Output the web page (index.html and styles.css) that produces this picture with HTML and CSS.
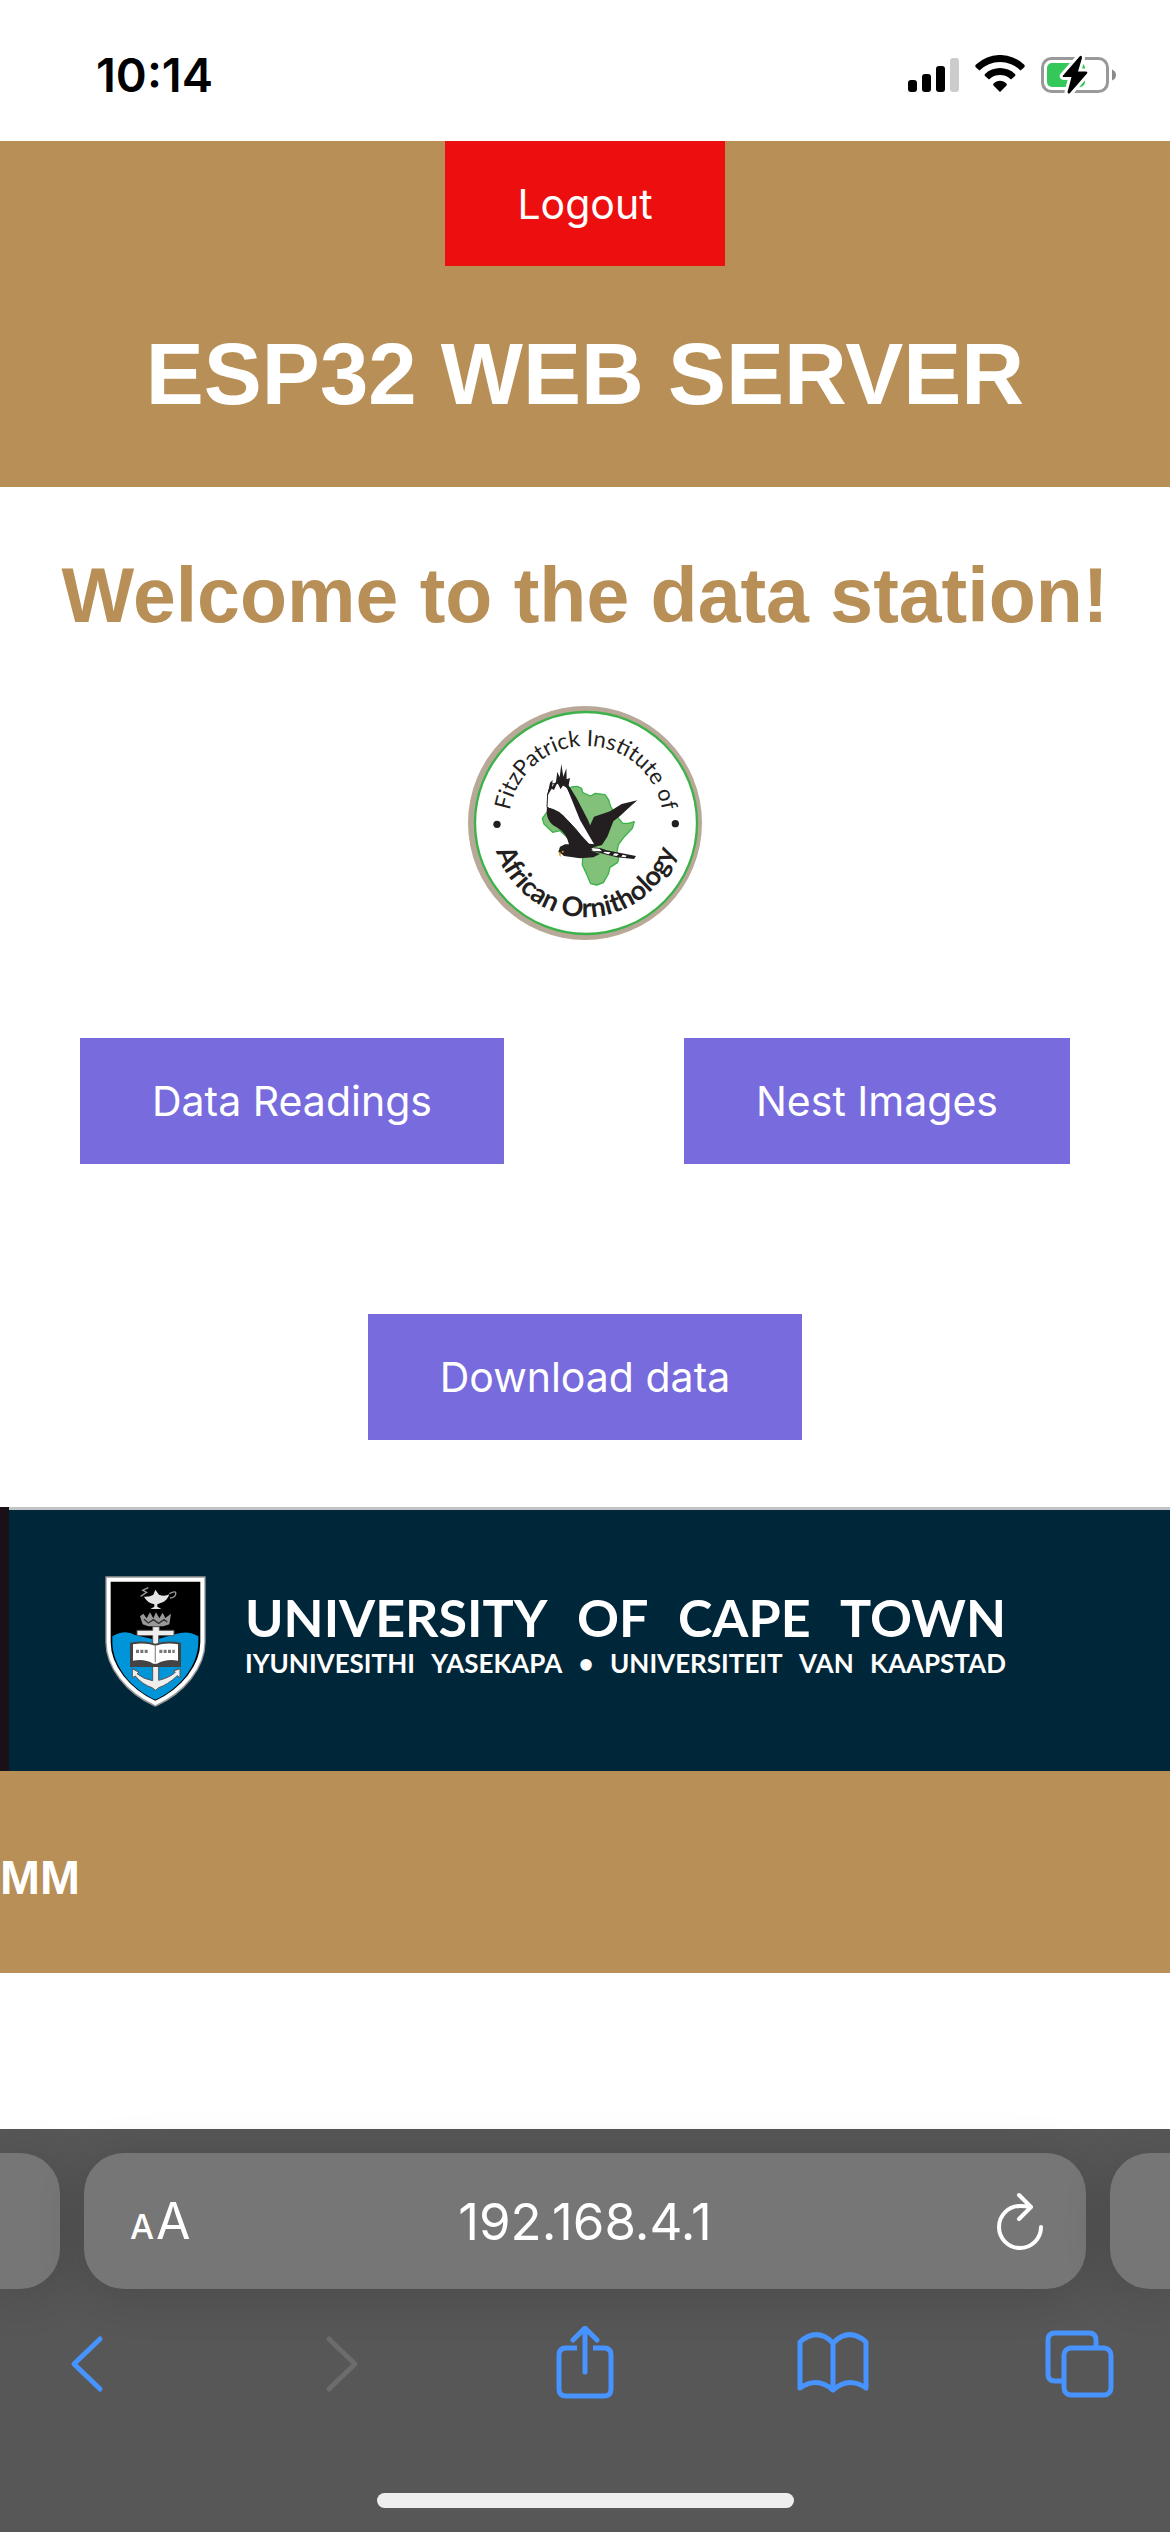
FILE: index.html
```html
<!DOCTYPE html>
<html lang="en">
<head>
<meta charset="utf-8">
<meta name="viewport" content="width=device-width, initial-scale=1">
<title>ESP32 Web Server</title>
<link rel="stylesheet" href="styles.css">
</head>
<body>
<div class="status-bar">
  <time class="clock">10:14</time>
  <svg class="status-icons" viewBox="0 0 210 40" role="img" aria-label="Signal, Wi-Fi and battery">
    <rect x="2" y="25" width="9" height="12" rx="3"/>
    <rect x="16" y="19" width="9" height="18" rx="3"/>
    <rect x="30" y="11" width="9" height="26" rx="3"/>
    <rect x="44" y="3" width="9" height="34" rx="3" fill="#ccc"/>
    <path d="M70 12.5Q68.500 11 70 9.500A35 35 0 0 1 118 9.500Q119.500 11 118 12.500L114.500 15.500A29 29 0 0 0 73.500 15.500Z"/>
    <path d="M79 21Q78 20 79 19A22 22 0 0 1 109 19Q110 20 109 21L105 24.500A16 16 0 0 0 83 24.500Z"/>
    <path d="M94 37L87.500 30.500Q86.500 29 88 28A10 10 0 0 1 100 28Q101.500 29 100.500 30.500Z"/>
    <rect x="136.500" y="3.500" width="65" height="33" rx="9" fill="none" stroke="#999" stroke-width="3"/>
    <path d="M206 14.500Q210 16 210 20Q210 24 206 25.500Z" fill="#8a8a8a"/>
    <rect x="141" y="8" width="38" height="24" rx="5" fill="#34c759"/>
    <path d="M174 1L157 20.500Q156 22 158 22H165.500L161.500 37Q162 39.500 164 38L181 18.500Q182 16.500 180 16.500H172L176 3Q176 0 174 1Z" stroke="#fff" stroke-width="6" paint-order="stroke" stroke-linejoin="round"/>
  </svg>
</div>

<header class="site-header">
  <button class="button button-logout" type="button">Logout</button>
  <h1>ESP32 WEB SERVER</h1>
</header>

<main>
  <h2>Welcome to the data station!</h2>
  <svg class="institute-logo" viewBox="54 48 702 702" role="img" aria-label="FitzPatrick Institute of African Ornithology">
    <defs>
      <path id="arc-top" d="M176 410V400A232 232 0 0 1 640 400V410"/>
      <path id="arc-bottom" d="M126 390V400A282 282 0 0 0 690 400V390"/>
    </defs>
    <circle cx="405" cy="399" r="351" fill="#b8a898"/>
    <circle cx="408" cy="399" r="333" fill="#fff" stroke="#3cb24a" stroke-width="7"/>
    <path d="M365 291L382 289L395 295L398 308L422 318L436 310L465 314L476 330L482 350L500 378L518 400L535 400L553 395L547 415L523 440L505 464L501 485L506 508L502 518L480 532L475 552L460 578L440 585L422 581L411 555L397 525L398 503L350 440L330 422L308 427L282 402L277 385L292 365L300 340Z" fill="#82c17a" stroke="#3cb24a" stroke-width="4" stroke-linejoin="round"/>
    <path d="M291 352L293 312L303 282L325 280L350 290L440 465L410 462Q350 370 291 352Z" fill="#fff" stroke="#231f20" stroke-width="3"/>
    <path d="M292 318L300 278L308 270L306 290L318 275L322 245L329 262L334 222L340 260L349 235L350 268L360 264L356 286L380 325L414 390L444 466L434 466L390 390L352 296L340 284L332 298L322 278L312 300L305 296Z" fill="#231f20"/>
    <path d="M291 352Q330 358 356 395L418 462L442 465L418 411L432 380L480 364L515 342L562 331L540 350L510 378L490 394L472 440L456 465L430 472L424 482L450 492L430 502L390 505L342 498L332 490L325 486L330 470L345 463H357Q350 430 320 412Q285 395 291 352Z" fill="#231f20"/>
    <path d="M424 473Q450 470 470 481L558 498L552 507L500 502L430 484Z" fill="#231f20"/>
    <path d="M424 474L448 476L456 484L430 483ZM464 485L482 487L476 493L460 488ZM494 490L506 492L500 498L488 496ZM518 494L530 497L526 502L514 500Z" fill="#fff"/>
    <path d="M326 487L333 488L332 502Q326 496 326 487Z" fill="#d7a52c"/>
    <circle cx="338" cy="485" r="3" fill="#d7a52c"/>
    <circle cx="141" cy="403" r="11" fill="#231f20"/>
    <circle cx="676" cy="401" r="11" fill="#231f20"/>
    <text class="arc-text"><textPath href="#arc-top" startOffset="50%">FitzPatrick Institute of</textPath></text>
    <text class="arc-text arc-text-bold"><textPath href="#arc-bottom" startOffset="50%">African Ornithology</textPath></text>
  </svg>
  <nav class="actions" aria-label="Station data">
    <button class="button" type="button">Data Readings</button>
    <button class="button" type="button">Nest Images</button>
  </nav>
  <button class="button button-download" type="button">Download data</button>
</main>

<section class="uct-banner" aria-label="University of Cape Town">
  <svg class="uct-crest" viewBox="75 77 303 396" aria-hidden="true">
    <path d="M82 84H371V275C371 350 310 425 226 463C142 425 82 350 82 275Z" fill="#000" stroke="#999" stroke-width="12"/>
    <path d="M97 258Q135 235 165 254L226 268L285 252Q325 238 355 258V275C355 345 300 415 226 448C152 415 97 345 97 275Z" fill="#0095d9"/>
    <path d="M86 88H367V275C367 348 308 420 226 458C144 420 86 348 86 275Z" fill="none" stroke="#fff" stroke-width="12"/>
    <path d="M192 139Q210 140 220 133L226 118L237 133Q254 140 268 132Q262 152 242 158L232 162V169L244 176H211L223 169V162Q200 156 192 139Z" fill="#e4e4e4"/>
    <path d="M205 112L188 120L200 126L182 138M268 130Q290 118 287 132Q284 142 270 143" fill="none" stroke="#999" stroke-width="4"/>
    <path d="M180 198L190 190L200 204L210 186L220 204L228 186L238 204L248 187L256 203L273 190L268 222L250 228H205L188 222Z" fill="#999"/>
    <path d="M192 207L205 218L220 208L236 219L252 208L262 215" fill="none" stroke="#333" stroke-width="4"/>
    <path d="M171 240H218V229H238V240H282V256H236V390Q268 382 286 366L280 362L300 355V382L292 376Q262 404 236 412L227 420L216 412Q186 402 166 377L157 382V355L177 366L171 370Q190 386 218 391V256H171Z" fill="#eee" stroke="#555" stroke-width="3"/>
    <path d="M150 277Q190 268 226 280Q264 268 303 277V350H150Z" fill="#444"/>
    <path d="M159 282Q195 276 226 286Q258 276 294 282V331Q258 325 231 340H220Q195 325 159 331Z" fill="#fff"/>
    <path d="M168 303H205M238 303H284" stroke="#777" stroke-width="10" stroke-dasharray="9 4"/>
    <path d="M226 286V336" stroke="#999" stroke-width="4"/>
  </svg>
  <div class="uct-wordmark">
    <p class="uct-name"><span>UNIVERSITY</span> <span>OF</span> <span>CAPE</span> <span>TOWN</span></p>
    <p class="uct-translations"><span>IYUNIVESITHI</span> <span>YASEKAPA</span> <span>•</span> <span>UNIVERSITEIT</span> <span>VAN</span> <span>KAAPSTAD</span></p>
  </div>
</section>

<footer class="site-footer"><p>MM</p></footer>

<div class="browser">
  <div class="tab-strip">
    <div class="tab-edge tab-edge-left"></div>
    <div class="address-bar">
      <button class="address-button text-size" type="button" aria-label="Text size"><span class="small-a">A</span><span>A</span></button>
      <input class="address" type="text" value="192.168.4.1" aria-label="Address">
      <button class="address-button reload" type="button" aria-label="Reload">
        <svg viewBox="0 0 48 60" width="48" height="60"><path d="M45 36A21 21 0 1 1 24 15Q30 15 35 16M23 4L35 16L23 28"/></svg>
      </button>
    </div>
    <div class="tab-edge tab-edge-right"></div>
  </div>
  <nav class="toolbar" aria-label="Browser">
    <button type="button" aria-label="Back"><svg viewBox="0 0 76 76"><path d="M50 13L24 38L50 63"/></svg></button>
    <button type="button" aria-label="Forward" disabled><svg viewBox="0 0 76 76"><path d="M30 13L56 38L30 63"/></svg></button>
    <button type="button" aria-label="Share"><svg viewBox="0 0 76 76"><path stroke-linecap="butt" d="M30 22H19Q12 22 12 29V63Q12 70 19 70H57Q64 70 64 63V29Q64 22 57 22H46"/><path d="M38 3V46M26 14L38 2L50 14"/></svg></button>
    <button type="button" aria-label="Bookmarks"><svg viewBox="0 0 76 76"><path d="M37 17Q21 1 4 16V62Q21 50 37 64Q53 50 70 62V16Q53 1 37 17V64"/></svg></button>
    <button type="button" aria-label="Tabs"><svg viewBox="0 0 76 76"><rect x="20" y="22" width="47" height="47" rx="7"/><path stroke-linecap="butt" d="M52 20V14Q52 7 45 7H11Q4 7 4 14V48Q4 55 11 55H18"/></svg></button>
  </nav>
  <div class="home-indicator"></div>
</div>
</body>
</html>
```
FILE: styles.css
```css
* {
  box-sizing: border-box;
}

body {
  margin: 0;
  min-height: 100vh;
  display: flex;
  flex-direction: column;
  background: #fff;
  font-family: "Liberation Sans", Arial, sans-serif;
}

h1, h2, p {
  margin: 0;
}

button, input {
  border: 0;
  padding: 0;
  background: none;
  font-family: Inter, "Noto Sans", sans-serif;
}

svg {
  display: block;
}

.status-bar {
  height: 141px;
  padding: 46px 54px 37px 96px;
  display: flex;
  justify-content: space-between;
  align-items: center;
}

.clock {
  font: 600 47px/58px Inter, sans-serif;
}

.status-icons {
  width: 210px;
  height: 40px;
}

.site-header {
  display: flex;
  flex-direction: column;
  align-items: center;
  padding-bottom: 63px;
  background: #b88f57;
  color: #fff;
}

h1 {
  margin-top: 58px;
  font-size: 87px;
  line-height: 100px;
  text-align: center;
}

.button {
  padding: 36px 72px;
  background: #776bdd;
  color: #fff;
  font-size: 41px;
  line-height: 54px;
}

.button-logout {
  padding-bottom: 35px;
  background: #ed0f0f;
}

main {
  display: flex;
  flex-direction: column;
  align-items: center;
  padding: 63px 0 67px;
}

h2 {
  color: #b88f57;
  font-size: 77px;
  line-height: 90px;
  text-align: center;
}

.institute-logo {
  width: 20%;
  margin: 66px 0 98px;
}

.arc-text {
  fill: #231f20;
  font: 400 67px Lato, sans-serif;
  text-anchor: middle;
}

.arc-text-bold {
  font-size: 81px;
  font-weight: 700;
}

.actions {
  align-self: stretch;
  display: flex;
  flex-wrap: wrap;
  justify-content: space-between;
  gap: 40px;
  padding: 0 100px 0 80px;
}

.button-download {
  margin-top: 150px;
}

.uct-banner {
  display: flex;
  gap: 39px;
  height: 264px;
  padding: 69px 96px 0 105px;
  background: #00263a;
  box-shadow: inset 9px 0 #1b1017, inset 0 3px #c0c4c6;
  color: #fff;
}

.uct-crest {
  flex: none;
  width: 101px;
  height: 132px;
}

.uct-wordmark {
  flex: 0 1 761px;
  padding-top: 11px;
  font-family: Lato, sans-serif;
  font-weight: 700;
}

.uct-name, .uct-translations {
  display: flex;
  justify-content: space-between;
}

.uct-name {
  font-size: 52px;
  line-height: 60px;
}

.uct-translations {
  font-size: 26px;
  line-height: 32px;
}

.site-footer {
  padding: 79px 0 67px;
  background: #b88f57;
  color: #fff;
  font-size: 48px;
  font-weight: 700;
  line-height: 56px;
}

.browser {
  margin-top: auto;
  padding: 24px 0;
  background: #575757;
}

.tab-strip {
  display: flex;
  gap: 24px;
}

.tab-edge, .address-bar {
  height: 136px;
  background: #767676;
  box-shadow: 0 6px 48px rgba(0, 0, 0, 0.16);
}

.tab-edge {
  flex: 0 0 60px;
}

.tab-edge-left {
  border-radius: 0 40px 40px 0;
}

.tab-edge-right {
  border-radius: 40px 0 0 40px;
}

.address-bar {
  flex: 1;
  min-width: 0;
  display: flex;
  border-radius: 40px;
}

.address-button {
  flex: 0 0 152px;
  display: flex;
  align-items: center;
  color: #fff;
}

.text-size {
  align-items: baseline;
  gap: 2px;
  padding-left: 46px;
  font-size: 50px;
  line-height: 136px;
}

.small-a {
  font-size: 34px;
  font-weight: 500;
}

.reload {
  justify-content: flex-end;
  padding-right: 42px;
}

.address {
  flex: 1;
  min-width: 0;
  color: #fff;
  font-size: 51px;
  text-align: center;
}

.reload svg, .toolbar svg {
  fill: none;
  stroke: currentColor;
  stroke-width: 5;
  stroke-linecap: round;
  stroke-linejoin: round;
}

.reload svg {
  stroke-width: 4;
}

.toolbar {
  display: flex;
  justify-content: space-between;
  padding: 37px 50px 91px;
}

.toolbar button {
  width: 76px;
  height: 76px;
  color: #4793ff;
}

.toolbar button:disabled {
  color: #6c6c6c;
}

.home-indicator {
  width: 417px;
  height: 15px;
  margin: 0 auto;
  border-radius: 8px;
  background: #eee;
}
```
